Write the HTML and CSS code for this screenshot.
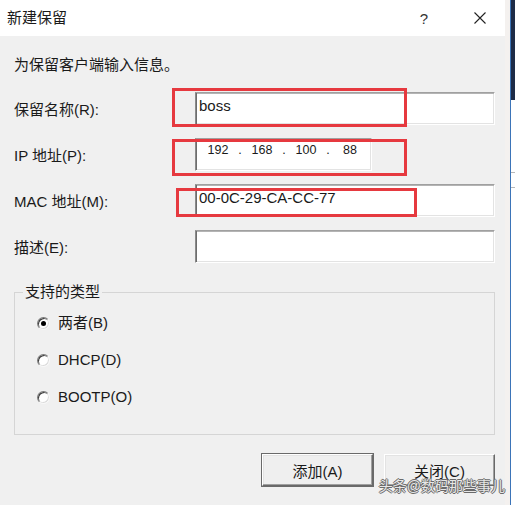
FILE: index.html
```html
<!DOCTYPE html>
<html lang="zh-CN">
<head>
    <meta charset="UTF-8">
    <meta name="viewport" content="width=device-width, initial-scale=1.0">
    <title>新建保留</title>
    <link rel="stylesheet" href="styles.css">
</head>
<body>
    <div class="screen">
        <div class="dialog">
            <!-- 标题栏 -->
            <div class="titlebar">
                <span class="title">新建保留</span>
                <span class="help">?</span>
                <span class="close">
                    <svg width="12" height="12" viewBox="0 0 12 12"><path d="M0.5 0.5 L11.5 11.5 M11.5 0.5 L0.5 11.5" stroke="#222" stroke-width="1.1" fill="none"/></svg>
                </span>
            </div>

            <div class="content">
                <p class="intro">为保留客户端输入信息。</p>

                <div class="form">
                    <div class="row">
                        <label class="label">保留名称(R):</label>
                        <div class="field">
                            <div class="input">boss</div>
                            <span class="mark mark-name"></span>
                        </div>
                    </div>
                    <div class="row">
                        <label class="label">IP 地址(P):</label>
                        <div class="field">
                            <div class="input input-ip">
                                <span class="octet">192</span><span class="dot">.</span>
                                <span class="octet">168</span><span class="dot">.</span>
                                <span class="octet">100</span><span class="dot">.</span>
                                <span class="octet">88</span>
                            </div>
                            <span class="mark mark-ip"></span>
                        </div>
                    </div>
                    <div class="row">
                        <label class="label">MAC 地址(M):</label>
                        <div class="field">
                            <div class="input">00-0C-29-CA-CC-77</div>
                            <span class="mark mark-mac"></span>
                        </div>
                    </div>
                    <div class="row">
                        <label class="label">描述(E):</label>
                        <div class="field">
                            <div class="input"></div>
                        </div>
                    </div>
                </div>

                <!-- 支持的类型 -->
                <fieldset class="group">
                    <legend>支持的类型</legend>
                    <div class="radios">
                        <div class="radio"><span class="circle checked"></span>两者(B)</div>
                        <div class="radio"><span class="circle"></span>DHCP(D)</div>
                        <div class="radio"><span class="circle"></span>BOOTP(O)</div>
                    </div>
                </fieldset>

                <div class="buttons">
                    <button class="btn btn-default">添加(A)</button>
                    <button class="btn">关闭(C)</button>
                    <span class="watermark">头条@数码那些事儿</span>
                </div>
            </div>
        </div>

        <!-- 后面窗口的边缘 -->
        <div class="edge">
            <div class="edge-light"></div>
            <div class="edge-window">
                <div class="edge-top"></div>
                <div class="edge-line"></div>
                <div class="edge-line"></div>
            </div>
        </div>
    </div>
</body>
</html>
```

FILE: styles.css
```css
body {
    margin: 0;
    padding: 0;
    font-family: "Liberation Sans", "Noto Sans CJK SC", sans-serif;
    font-size: 15px;
    color: #1a1a1a;
    overflow: hidden;
}

.screen {
    display: flex;
    width: 515px;
    height: 505px;
}

.dialog {
    width: 505px;
    background-color: #f0f0f0;
    display: flex;
    flex-direction: column;
}

.titlebar {
    height: 36px;
    background: #ffffff;
    display: flex;
    align-items: center;
}

.title {
    padding-left: 7px;
    line-height: 20px;
    flex: 1;
}

.help {
    width: 16px;
    text-align: center;
    font-size: 15px;
    color: #333333;
    margin-right: 42px;
}

.close {
    display: flex;
    margin-right: 19px;
}

.content {
    padding: 0 10px 0 14px;
}

.intro {
    margin: 19px 0 0;
    line-height: 20px;
}

.form {
    margin-top: 17px;
    display: flex;
    flex-direction: column;
    gap: 13px;
}

.row {
    display: grid;
    grid-template-columns: 181px 300px;
    align-items: center;
}

.label {
    line-height: 20px;
    padding-top: 3px;
}

.field {
    position: relative;
}

.input {
    box-sizing: border-box;
    height: 33px;
    background: #ffffff;
    border: 1px solid;
    border-color: #a0a0a0 #ffffff #ffffff #8a8a8a;
    box-shadow: inset 1px 0 0 #6d6d6d, inset 0 1px 0 #b4b4b4, inset -1px -1px 0 #e3e3e3;
    padding: 3px 3px 0;
    line-height: 20px;
}

.input-ip {
    width: 177px;
    display: flex;
    font-size: 12.5px;
    line-height: 16px;
    padding: 3px 0 0 5px;
}

.octet {
    width: 34px;
    text-align: center;
}

.dot {
    width: 10px;
    text-align: center;
}

/* 红色标注框 */
.mark {
    position: absolute;
    box-sizing: border-box;
    border: 3px solid #e6393f;
}

.mark-name {
    left: -23px;
    top: -4px;
    width: 235px;
    height: 39px;
}

.mark-ip {
    left: -23px;
    top: 1px;
    width: 235px;
    height: 37px;
}

.mark-mac {
    left: -19px;
    top: 4px;
    width: 241px;
    height: 29px;
}

.group {
    margin: 20px 0 0;
    padding: 0 10px 28px 8px;
    border: 1px solid #d5d5d5;
    min-width: 0;
}

.group legend {
    padding: 0 2px;
    line-height: 18px;
}

.radios {
    margin-top: 13px;
    padding-left: 14px;
    display: flex;
    flex-direction: column;
    gap: 19px;
}

.radio {
    display: flex;
    align-items: center;
    line-height: 18px;
}

.circle {
    box-sizing: border-box;
    width: 13px;
    height: 13px;
    border-radius: 50%;
    border: 1px solid;
    border-color: #7a7a7a #f8f8f8 #f8f8f8 #7a7a7a;
    background: #ffffff;
    box-shadow: inset 1px 1px 0 #3c3c3c, inset -1px -1px 0 #dcdcdc;
    margin-right: 8px;
    position: relative;
}

.circle.checked::after {
    content: "";
    position: absolute;
    left: 3px;
    top: 3px;
    width: 5px;
    height: 5px;
    border-radius: 50%;
    background: #000000;
}

.buttons {
    position: relative;
    margin-top: 19px;
    display: flex;
    justify-content: flex-end;
    gap: 11px;
}

.btn {
    box-sizing: border-box;
    width: 111px;
    height: 32px;
    font-family: inherit;
    font-size: 15px;
    color: #1a1a1a;
    background: #efefef;
    border: 1px solid;
    border-color: #ffffff #696969 #696969 #ffffff;
    box-shadow: inset -1px -1px 0 #a0a0a0, inset 1px 1px 0 #e3e3e3;
    padding: 0;
}

.btn-default {
    outline: 1px solid #6a6a6a;
}

.watermark {
    position: absolute;
    right: -10px;
    top: 23px;
    font-size: 14px;
    line-height: 18px;
    color: rgba(255, 255, 255, 0.85);
    text-shadow: 1px 0 0 #6a6a6a, -1px 0 0 #6a6a6a, 0 1px 0 #6a6a6a, 0 -1px 0 #6a6a6a;
    white-space: nowrap;
}

/* 右侧另一个窗口 */
.edge {
    width: 10px;
    display: flex;
}

.edge-light {
    width: 5px;
    background: #f4f1ef;
}

.edge-window {
    flex: 1;
    border-left: 1px solid #3b74b8;
    background: #ffffff;
}

.edge-top {
    height: 100px;
    background: #1d2b47;
}

.edge-line {
    height: 1px;
    background: #b8b8b8;
    margin-top: 72px;
}

.edge-line + .edge-line {
    margin-top: 14px;
}
```
